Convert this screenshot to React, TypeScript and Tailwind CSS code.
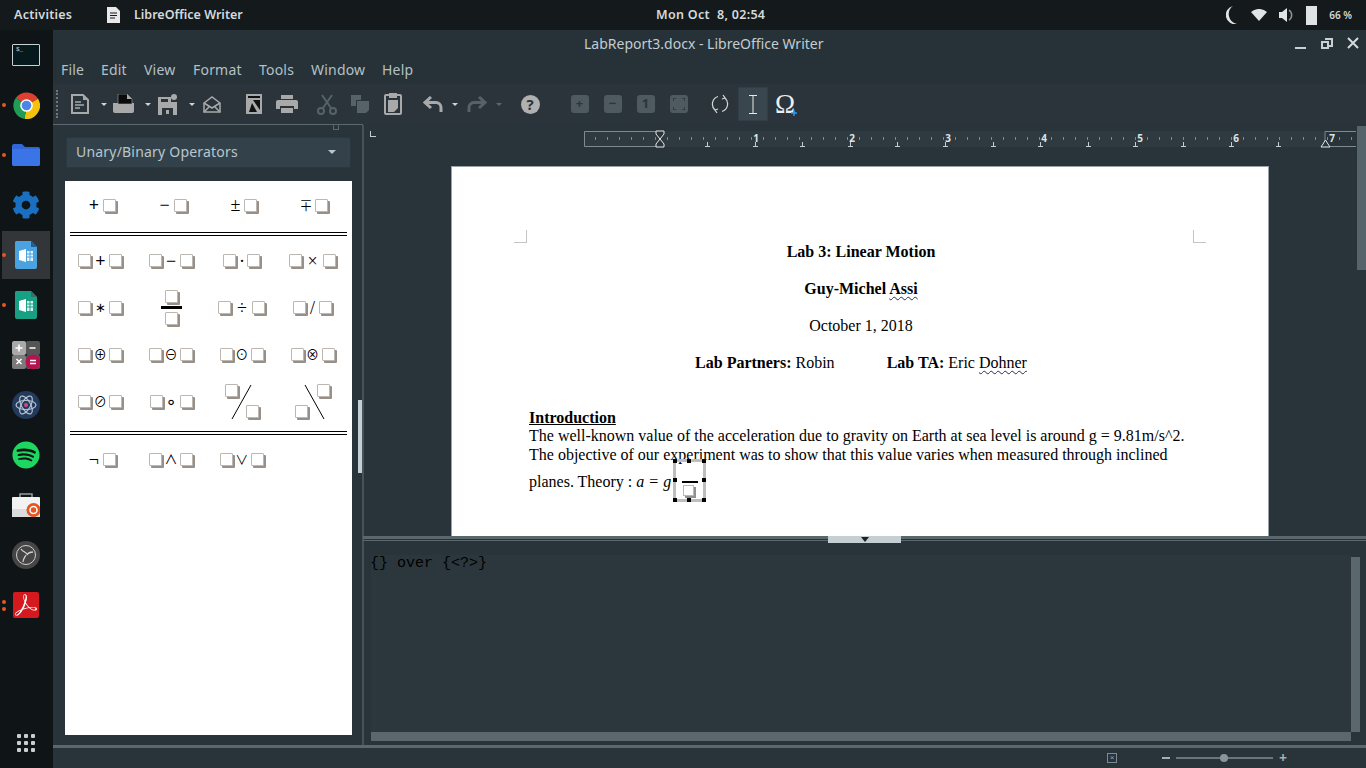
import React from 'react'
import { FaCog, FaSpotify } from 'react-icons/fa'
import { SiAdobeacrobatreader } from 'react-icons/si'

const MENUS = [
  { label: 'File', w: 'w-[40px]' },
  { label: 'Edit', w: 'w-[43px]' },
  { label: 'View', w: 'w-[49px]' },
  { label: 'Format', w: 'w-[66px]' },
  { label: 'Tools', w: 'w-[52px]' },
  { label: 'Window', w: 'w-[71px]' },
  { label: 'Help', w: 'w-[40px]' },
]

function Dot({ className = '' }: { className?: string }) {
  return <span className={`absolute left-[2px] h-[4px] w-[4px] rounded-full bg-[#e95420] ${className}`} />
}

function DockItem({ children, dot, dots, active }: { children: React.ReactNode; dot?: boolean; dots?: boolean; active?: boolean }) {
  return (
    <div className="relative flex h-[50px] w-[53px] shrink-0 items-center justify-center pr-[1px]">
      {active && <div className="absolute left-[2px] top-[1px] h-[48px] w-[48px] bg-[#333638]" />}
      {dot && <Dot className="top-[23px]" />}
      {dots && <><Dot className="top-[20px]" /><Dot className="top-[27px]" /></>}
      <div className="relative flex h-[28px] w-[28px] items-center justify-center">{children}</div>
    </div>
  )
}

function Chrome() {
  return (
    <svg width="27" height="27" viewBox="0 0 28 28">
      <path d="M14 14 L3 6 A14 14 0 0 1 26 7 Z" fill="#dd3f33" />
      <path d="M14 14 L26 7 A14 14 0 0 1 12 28 Z" fill="#f4c20d" />
      <path d="M14 14 L12 28 A14 14 0 0 1 3 6 Z" fill="#1f9d55" />
      <circle cx="14" cy="14" r="6.5" fill="#fff" />
      <circle cx="14" cy="14" r="5" fill="#4a86e8" />
    </svg>
  )
}

function DocIcon({ color, fold }: { color: string; fold: string }) {
  return (
    <svg width="22" height="28" viewBox="0 0 22 28">
      <path d="M1 0h15l6 6v20a2 2 0 0 1-2 2H2a2 2 0 0 1-2-2V1z" fill={color} />
      <path d="M16 0l6 6h-6z" fill={fold} />
      <path d="M4 10l7-2v13l-7-2z" fill="#fff" />
      <path d="M12 10h6v10h-6z" fill="#fff" opacity="0.85" />
      <path d="M12 13h6M12 16h6M15 10v10" stroke={color} strokeWidth="1" />
    </svg>
  )
}

function Dock() {
  return (
    <div className="flex w-[53px] shrink-0 flex-col bg-[#0f1517]">
      <DockItem>
        <div className="h-[22px] w-[28px] rounded-[1px] border border-[#c9d0d2] bg-[#06191d] pl-[3px] text-[6px] leading-[10px] text-[#d7dddf] [font-family:'Liberation_Mono',monospace]">$_</div>
      </DockItem>
      <DockItem dot><Chrome /></DockItem>
      <DockItem dot>
        <svg width="28" height="22" viewBox="0 0 28 22">
          <path d="M0 2a2 2 0 0 1 2-2h8l3 3h13a2 2 0 0 1 2 2v15a2 2 0 0 1-2 2H2a2 2 0 0 1-2-2z" fill="#2f66d8" />
          <path d="M0 5h28v15a2 2 0 0 1-2 2H2a2 2 0 0 1-2-2z" fill="#3b74e6" />
        </svg>
      </DockItem>
      <DockItem><FaCog size={28} className="text-[#1a6fc0]" /></DockItem>
      <DockItem dot active><DocIcon color="#4aa3e0" fold="#1f5f94" /></DockItem>
      <DockItem dot><DocIcon color="#18a085" fold="#3f6b68" /></DockItem>
      <DockItem>
        <svg width="28" height="28" viewBox="0 0 28 28">
          <rect width="14" height="14" rx="2" fill="#a9a9a9" />
          <rect x="14" width="14" height="14" rx="2" fill="#555" />
          <rect y="14" width="14" height="14" rx="2" fill="#7b7b7b" />
          <rect x="14" y="14" width="14" height="14" rx="2" fill="#555" />
          <path d="M7 3.5v7M3.5 7h7M17.5 7h6" stroke="#fff" strokeWidth="1.6" />
          <path d="M4.5 18l5 5M9.500 18l-5 5" stroke="#fff" strokeWidth="1.6" />
          <circle cx="21" cy="21" r="7.500" fill="#b5124f" />
          <path d="M18 19.500h6M18 22.500h6" stroke="#fff" strokeWidth="1.6" />
        </svg>
      </DockItem>
      <DockItem>
        <svg width="28" height="28" viewBox="0 0 28 28">
          <circle cx="14" cy="14" r="14" fill="#223a5c" />
          <g fill="none" stroke="#b7c3d3" strokeWidth="1.200">
            <ellipse cx="14" cy="14" rx="10" ry="4.500" />
            <ellipse cx="14" cy="14" rx="10" ry="4.500" transform="rotate(60 14 14)" />
            <ellipse cx="14" cy="14" rx="10" ry="4.500" transform="rotate(120 14 14)" />
          </g>
          <circle cx="14" cy="14" r="2" fill="#d4478b" />
        </svg>
      </DockItem>
      <DockItem><FaSpotify size={28} className="text-[#1ed760]" /></DockItem>
      <DockItem>
        <svg width="28" height="24" viewBox="0 0 28 24">
          <path d="M8 4V1h12v3" fill="none" stroke="#9b9b9b" strokeWidth="1.500" />
          <rect y="4" width="28" height="20" rx="1" fill="#f2f2f2" />
          <rect y="16" width="28" height="8" fill="#dcdcdc" />
          <circle cx="21.500" cy="17" r="7" fill="#e95420" />
          <circle cx="21.500" cy="17" r="3.500" fill="none" stroke="#fff" strokeWidth="1.500" />
        </svg>
      </DockItem>
      <DockItem>
        <svg width="28" height="28" viewBox="0 0 28 28">
          <circle cx="14" cy="14" r="14" fill="#454545" />
          <circle cx="14" cy="14" r="9.500" fill="none" stroke="#d0d0d0" strokeWidth="1" />
          <path d="M9 8c2 3 5 3 6 5M21 11c-3 0-5 1-6 3M11 21c0-3 2-5 3-7" fill="none" stroke="#d0d0d0" strokeWidth="1.300" />
        </svg>
      </DockItem>
      <DockItem dots>
        <div className="flex h-[26px] w-[26px] items-center justify-center rounded-[2px] bg-[#d5191f]">
          <SiAdobeacrobatreader size={22} className="text-white" />
        </div>
      </DockItem>
      <div className="mt-auto flex h-[50px] items-center justify-center pr-[1px]">
        <div className="grid grid-cols-3 gap-[3px]">
          {Array.from({ length: 9 }).map((_, i) => <span key={i} className="h-[4px] w-[4px] rounded-[1px] bg-[#c9ced0]" />)}
        </div>
      </div>
    </div>
  )
}

function Caret({ dim }: { dim?: boolean }) {
  return <span className={`ml-[6px] mr-[2px] h-0 w-0 border-x-[3px] border-t-[3px] border-x-transparent ${dim ? 'border-t-[#5d686d]' : 'border-t-[#d0d3d5]'}`} />
}

function Tool({ children, className = 'w-[33px]' }: { children: React.ReactNode; className?: string }) {
  return <div className={`flex h-[34px] shrink-0 items-center justify-center ${className}`}>{children}</div>
}

function ZoomBtn({ children }: { children: React.ReactNode }) {
  return (
    <Tool>
      <div className="flex h-[18px] w-[18px] items-center justify-center rounded-[3px] bg-[#4e5a60] text-[13px] font-bold text-[#2b363c] [font-family:'Noto_Sans',sans-serif]">{children}</div>
    </Tool>
  )
}

function Toolbar() {
  const ico = '#a9a9a9'
  const off = '#566268'
  return (
    <div className="flex h-[40px] shrink-0 items-center bg-[#2a343a] pl-[3px]">
      <div className="mr-[7px] h-[28px] w-[2px] border-l-2 border-dotted border-[#6d777c]" />
      <Tool className="w-[30px]">
        <svg width="18" height="20" viewBox="0 0 18 20">
          <path d="M1 1h11l5 5v13H1z" fill="none" stroke={ico} strokeWidth="2" />
          <path d="M12 1l5 5h-5z" fill={ico} />
          <path d="M4 8h6M4 11h9M4 14h5" stroke={ico} strokeWidth="1.500" />
        </svg>
      </Tool>
      <Caret />
      <Tool className="w-[30px]">
        <svg width="22" height="20" viewBox="0 0 22 20">
          <path d="M0 9h21v8a2 2 0 0 1-2 2H2a2 2 0 0 1-2-2z" fill={ico} />
          <path d="M5 10V0h9l5 5v5z" fill="#0b0b0b" stroke={ico} strokeWidth="0.6" />
          <path d="M14 0l5 5h-5z" fill={ico} />
        </svg>
      </Tool>
      <Caret />
      <Tool className="w-[30px]">
        <svg width="20" height="21" viewBox="0 0 20 21">
          <path d="M0 3h13v5h6v13H0z" fill={ico} />
          <rect x="3" y="5" width="7" height="3" fill="#2a343a" />
          <rect x="4" y="14" width="11" height="7" fill="#2a343a" />
          <rect x="8" y="16" width="3" height="4" fill={ico} />
          <circle cx="16" cy="3" r="3" fill={ico} />
        </svg>
      </Tool>
      <Caret />
      <Tool className="w-[29px]">
        <svg width="18" height="17" viewBox="0 0 18 17" fill="none" stroke={ico} strokeWidth="1.500">
          <path d="M1 7l8-6 8 6v9H1z" />
          <path d="M1 7l8 5 8-5M1 16l6-6M17 16l-6-6" />
        </svg>
      </Tool>
      <Tool className="ml-[12px] w-[32px]">
        <svg width="16" height="20" viewBox="0 0 16 20">
          <rect width="16" height="20" fill={ico} />
          <rect x="2" y="2" width="12" height="16" fill="#111" />
          <path d="M2 4h12v2H7l7 10v2h-3L6 9l-3 9H2z" fill={ico} />
        </svg>
      </Tool>
      <Tool>
        <svg width="22" height="18" viewBox="0 0 22 18">
          <rect x="5" width="12" height="4" fill={ico} />
          <path d="M2 5h18a2 2 0 0 1 2 2v7h-4v-3H4v3H0V7a2 2 0 0 1 2-2z" fill={ico} />
          <rect x="5" y="13" width="12" height="5" fill={ico} />
        </svg>
      </Tool>
      <Tool className="ml-[7px] w-[33px]">
        <svg width="20" height="21" viewBox="0 0 20 21" fill="none" stroke={off} strokeWidth="2">
          <circle cx="4" cy="17" r="3" />
          <circle cx="16" cy="17" r="3" />
          <path d="M6 14L15 1M14 14L5 1" />
        </svg>
      </Tool>
      <Tool>
        <svg width="18" height="18" viewBox="0 0 18 18" fill={off}>
          <path d="M0 0h10v5H5v6H0z" />
          <path d="M6 6h12v9l-3 3H6z" />
        </svg>
      </Tool>
      <Tool>
        <svg width="18" height="22" viewBox="0 0 18 22">
          <rect x="1" y="2" width="16" height="19" rx="1" fill="none" stroke={ico} strokeWidth="2" />
          <rect x="5" y="0" width="8" height="5" fill={ico} />
          <path d="M4 7h10v8l-4 4H4z" fill={ico} />
        </svg>
      </Tool>
      <Tool className="w-[48px]">
        <svg width="20" height="17" viewBox="0 0 20 17" fill="none" stroke={ico} strokeWidth="3">
          <path d="M8 1L2 6.500 8 12" />
          <path d="M3 6.500h10a5 5 0 0 1 5 5V16" />
        </svg>
      </Tool>
      <span className="-ml-[5px] h-0 w-0 border-x-[3px] border-t-[3px] border-x-transparent border-t-[#d0d3d5]" />
      <Tool className="w-[38px]">
        <svg width="20" height="17" viewBox="0 0 20 17" fill="none" stroke={off} strokeWidth="3">
          <path d="M12 1l6 5.500L12 12" />
          <path d="M17 6.500H7a5 5 0 0 0-5 5V16" />
        </svg>
      </Tool>
      <span className="h-0 w-0 border-x-[3px] border-t-[3px] border-x-transparent border-t-[#5d686d]" />
      <Tool className="w-[56px]">
        <div className="flex h-[19px] w-[19px] items-center justify-center rounded-full bg-[#b0b0b0] text-[15px] font-bold text-[#2a343a] [font-family:'Noto_Sans',sans-serif]">?</div>
      </Tool>
      <div className="w-[5px] shrink-0" />
      <ZoomBtn>+</ZoomBtn>
      <ZoomBtn>−</ZoomBtn>
      <ZoomBtn>1</ZoomBtn>
      <ZoomBtn>
        <svg width="12" height="12" viewBox="0 0 12 12" fill="none" stroke="#2b363c" strokeWidth="1.500">
          <path d="M0 3V0h3M9 0h3v3M12 9v3H9M3 12H0V9" />
        </svg>
      </ZoomBtn>
      <Tool className="ml-[9px] w-[32px]">
        <svg width="18" height="20" viewBox="0 0 18 20" fill="none" stroke="#d5d7d8" strokeWidth="1.200">
          <path d="M7 2.500A8 8 0 0 0 4 16" />
          <path d="M11 17.500A8 8 0 0 0 14 4" />
          <path d="M12 1l2 3-3 1M6 19l-2-3 3-1" />
        </svg>
      </Tool>
      <div className="ml-[2px] flex h-[34px] w-[30px] shrink-0 items-center justify-center border border-[#323e44] bg-[#3a464d]">
        <svg width="8" height="19" viewBox="0 0 8 19" fill="none" stroke="#e6e8e9" strokeWidth="1">
          <path d="M0 .500h8M0 18.500h8M4 .500v18" />
        </svg>
      </div>
      <div className="relative ml-[6px] flex h-[34px] w-[22px] items-center justify-center text-[27px] leading-none text-[#eceeef] [font-family:'Liberation_Serif',serif]">
        Ω
        <svg width="6" height="6" viewBox="0 0 6 6" className="absolute bottom-[5px] right-[-1px]">
          <path d="M3 0v6M0 3h6" stroke="#2c9cf0" strokeWidth="1.500" />
        </svg>
      </div>
    </div>
  )
}

function Box() {
  return <span className="block h-[13px] w-[13px] shrink-0 rounded-[1px] border border-[#bdb7b2] bg-white shadow-[2px_2px_0_#97908a]" />
}

function Op({ left, op, right, w = 'w-[18px]', bold, sm }: { left?: boolean; op: string; right?: boolean; w?: string; bold?: boolean; sm?: boolean }) {
  return (
    <div className="flex items-center justify-center">
      {left && <Box />}
      <span className={`${w} ${bold ? 'font-bold' : ''} ${sm ? 'text-[13px]' : 'text-[18px]'} text-center leading-none text-black [font-family:'Liberation_Serif','Noto_Sans_CJK_SC','DejaVu_Sans',serif]`}>{op}</span>
      {right && <Box />}
    </div>
  )
}

function DoubleRule() {
  return <div className="mx-[5px] h-[4px] border-y border-black bg-white" />
}

function Palette() {
  return (
    <div className="h-[554px] w-[287px] bg-white">
      <div className="grid h-[51px] grid-cols-4 items-center pb-[3px] pr-[4px]">
        <Op op="+" right bold /><Op op="−" right /><Op op="±" right /><Op op="∓" right sm />
      </div>
      <DoubleRule />
      <div className="grid grid-cols-4 grid-rows-[47px_47px_47px_47px] items-center pr-[4px] pt-[1px]">
        <Op left op="+" right bold /><Op left op="−" right /><Op left op="·" right w="w-[11px]" /><Op left op="×" right w="w-[21px]" />
        <Op left op="∗" right sm />
        <div className="flex flex-col items-center">
          <Box />
          <span className="my-[3px] h-[3px] w-[21px] bg-black" />
          <Box />
        </div>
        <Op left op="÷" right w="w-[21px]" /><Op left op="/" right w="w-[13px]" />
        <Op left op="⊕" right sm /><Op left op="⊖" right sm /><Op left op="⊙" right sm /><Op left op="⊗" right sm />
        <Op left op="⊘" right sm /><Op left op="∘" right w="w-[17px]" />
        <div className="relative mx-auto h-[36px] w-[36px]">
          <svg className="absolute inset-0" width="36" height="36" viewBox="0 0 36 36"><path d="M8 35L27 1" stroke="#000" strokeWidth="1" /></svg>
          <div className="absolute left-[1px] top-0"><Box /></div>
          <div className="absolute right-[1px] bottom-[2px]"><Box /></div>
        </div>
        <div className="relative mx-auto h-[36px] w-[36px]">
          <svg className="absolute inset-0" width="36" height="36" viewBox="0 0 36 36"><path d="M10 1l19 34" stroke="#000" strokeWidth="1" /></svg>
          <div className="absolute right-[1px] top-0"><Box /></div>
          <div className="absolute left-0 bottom-[2px]"><Box /></div>
        </div>
      </div>
      <div className="h-[6px]" />
      <DoubleRule />
      <div className="grid h-[52px] grid-cols-4 items-center pb-[3px] pr-[4px]">
        <Op op="¬" right /><Op left op="∧" right sm /><Op left op="∨" right sm />
      </div>
    </div>
  )
}

function Sidebar() {
  return (
    <div className="relative flex w-[310px] shrink-0 flex-col border-t border-[#5a686e] pl-[12px] pt-[12px]">
      <span className="absolute -top-[1px] left-[280px] h-[6px] w-[6px] border border-t-0 border-[#5a686e]" />
      <div className="ml-[1px] flex h-[31px] w-[285px] items-center justify-between border border-[#2c373d] bg-[#33424a] pb-[2px] pl-[9px] pr-[14px] text-[14px] tracking-[0.2px] text-[#b9c6cc] [font-family:'Noto_Sans',sans-serif]">
        Unary/Binary Operators
        <span className="h-0 w-0 border-x-[4px] border-t-[4px] border-x-transparent border-t-[#b9c6cc]" />
      </div>
      <div className="mt-[13px]"><Palette /></div>
      {/* splitter line and its grip */}
      <div className="absolute bottom-0 right-[-1px] top-0 w-[2px] bg-[#46545a]" />
      <div className="absolute right-[1px] top-[275px] h-[73px] w-[4px] bg-[#c5ced3]" />
    </div>
  )
}

function Ruler() {
  const nums = [1, 2, 3, 4, 5, 6, 7]
  const minor = Array.from({ length: 64 }).map((_, i) => 232 + i * 12)
  const tabs = Array.from({ length: 14 }).map((_, i) => 344 + i * 47.6)
  return (
    <svg width="993" height="30" viewBox="0 0 993 30" className="block shrink-0">
      <rect x="221" y="4" width="740" height="16" fill="#2f3a40" />
      <path d="M221.500 4.500h76v15h-76zM993 4.500h-31v15h31" fill="none" stroke="#808a8e" />
      {minor.map(x => (
        <line key={x} x1={x + 0.5} x2={x + 0.5} y1={(x - 297) % 48 === 0 ? 7 : 10} y2={(x - 297) % 48 === 0 ? 16 : 13} stroke="#7f898d" />
      ))}
      {tabs.map(x => (
        <path key={x} d={`M${Math.round(x)}.5 15v4M${Math.round(x) - 2} 19.500h5`} stroke="#c8ccce" fill="none" />
      ))}
      {nums.map(n => (
        <text key={n} x={297 + n * 96} y="15" textAnchor="middle" fontSize="10" fontWeight="700" fill="#dfe3e4" fontFamily="Noto Sans, sans-serif">{n}</text>
      ))}
      <path d="M293 4h8v3l-4 5-4-5zM293 20h8v-3l-4-5-4 5z" fill="#2a343a" stroke="#e6e8e9" />
      <path d="M958 20h9l-2-3-2.500-4-2.500 4z" fill="#2a343a" stroke="#e6e8e9" />
    </svg>
  )
}

function CropMark({ className }: { className: string }) {
  return <div className={`absolute h-[13px] w-[13px] border-[#c4c4c4] ${className}`} />
}

function Squiggle({ children }: { children: React.ReactNode }) {
  return <span className="underline decoration-[#2b2b55] decoration-wavy decoration-1 underline-offset-2">{children}</span>
}

function Handle({ className }: { className: string }) {
  return <span className={`absolute h-[4px] w-[4px] bg-black ${className}`} />
}

function Selection() {
  return (
    <span className="relative ml-[2px] inline-block h-0 w-[33px]">
      <span className="absolute left-0 top-[-28px] h-[43px] w-[33px] border-[3px] border-[#bdbdbd]">
        <span className="absolute left-[6px] top-[19px] h-[2px] w-[16px] bg-black" />
        <span className="absolute left-[7px] top-[23px] block h-[11px] w-[11px] border border-[#bdb7b2] bg-white shadow-[2px_2px_0_#97908a]" />
        <Handle className="-left-[3px] -top-[3px]" />
        <Handle className="left-[11px] -top-[3px]" />
        <Handle className="-right-[3px] -top-[3px]" />
        <Handle className="-left-[3px] top-[16px]" />
        <Handle className="-right-[3px] top-[16px]" />
        <Handle className="-left-[3px] -bottom-[3px]" />
        <Handle className="left-[11px] -bottom-[3px]" />
        <Handle className="-right-[3px] -bottom-[3px]" />
      </span>
    </span>
  )
}

function Page() {
  return (
    <div className="relative ml-[88px] h-[370px] w-[818px] shrink-0 border-x border-t border-[#9aa2a6] bg-white pl-[77px] pt-[76px] text-[16px] leading-[18.5px] text-black [font-family:'Liberation_Serif',serif]">
      <CropMark className="left-[62px] top-[63px] border-b border-r" />
      <CropMark className="right-[62px] top-[63px] border-b border-l" />
      <div className="w-[664px] whitespace-nowrap">
        <div className="text-center font-bold">Lab 3: Linear Motion</div>
        <div className="mt-[18.5px] text-center font-bold">Guy-Michel <Squiggle>Assi</Squiggle></div>
        <div className="mt-[18.5px] text-center">October 1, 2018</div>
        <div className="mt-[18.5px] flex justify-center">
          <span><b>Lab Partners:</b> Robin</span>
          <span className="ml-[52px]"><b>Lab TA:</b> Eric <Squiggle>Dohner</Squiggle></span>
        </div>
        <div className="mt-[36px] font-bold underline">Introduction</div>
        <div>The well-known value of the acceleration due to gravity on Earth at sea level is around g = 9.81m/s^2.</div>
        <div>The objective of our experiment was to show that this value varies when measured through inclined</div>
        <div className="mt-[8.500px] flex items-baseline">
          <span className="whitespace-pre">planes. Theory : <i>a</i> <span className="ml-[1px]">=</span> <i className="ml-[1px]">g</i></span>
          <Selection />
        </div>
      </div>
    </div>
  )
}

function Workspace() {
  return (
    <div className="flex min-w-0 flex-1 flex-col">
      <div className="flex h-[412px] shrink-0">
        <div className="relative w-[994px] shrink-0 overflow-hidden">
          <div className="h-[3px]" />
          <Ruler />
          <span className="absolute left-[7px] top-[7px] h-[6px] w-[6px] border-b border-l border-[#c5cace]" />
          <div className="h-[9px]" />
          <Page />
        </div>
        <div className="w-[9px] shrink-0 pt-[2px]">
          <div className="h-[144px] bg-[#55636a]" />
        </div>
      </div>
      <div className="relative h-[7px] shrink-0 border-t-[3px] border-[#5a686e]">
        <div className="mt-[1px] h-[1px] bg-[#5a686e]" />
        <div className="absolute -top-[3px] left-[465px] flex h-[7px] w-[73px] items-center justify-center bg-[#c5ced3]">
          <span className="h-0 w-0 border-x-[4px] border-t-[5px] border-x-transparent border-t-[#1d2427]" />
        </div>
      </div>
      <div className="flex min-h-0 flex-1 pl-[8px] pt-[12px]">
        <div className="flex w-[980px] flex-col">
          <div className="flex-1 bg-[#2c373d] pt-[1px] text-[15px] leading-[16px] text-black [font-family:'Liberation_Mono',monospace]">
            <span className="-ml-[1px] block">{'{} over {<?>}'}</span>
          </div>
          <div className="mb-[4px] h-[9px] bg-[#5a686e]" />
        </div>
        <div className="mb-[13px] mt-[2px] w-[9px] bg-[#5a686e]" />
      </div>
    </div>
  )
}

function StatusBar() {
  return (
    <div className="flex h-[23px] shrink-0 items-center border-t-[3px] border-[#5a686e] bg-[#28333a] pl-[1054px]">
      <div className="flex h-[10px] w-[10px] items-center justify-center border border-[#80898d] text-[8px] leading-none text-[#a0a8ab] [font-family:'Liberation_Sans',sans-serif]">×</div>
      <span className="ml-[45px] h-[2px] w-[8px] bg-[#a9adaf]" />
      <div className="relative ml-[6px] h-[2px] w-[97px] bg-[#6b767b]">
        <span className="absolute left-[44px] top-[-3px] h-[8px] w-[8px] rounded-full bg-[#8b9498]" />
      </div>
      <span className="ml-[6px] text-[14px] font-bold leading-none text-[#a9adaf] [font-family:'Noto_Sans',sans-serif]">+</span>
    </div>
  )
}

export default function App() {
  return (
    <div className="flex h-[768px] w-[1366px] flex-col overflow-hidden bg-[#28333a] [font-family:'Noto_Sans',sans-serif]">
      <div className="flex h-[30px] shrink-0 items-center bg-[#14191c] text-[12.500px] font-semibold text-[#d3dadd]">
        <span className="ml-[14px] w-[93px] tracking-[0.25px]">Activities</span>
        <svg width="13" height="16" viewBox="0 0 13 16" className="mr-[14px]">
          <path d="M0 0h9l4 4v12H0z" fill="#e8e8e8" />
          <path d="M3 6h7M3 8.500h7M3 11h5" stroke="#14191c" />
        </svg>
        <span className="w-[522px]">LibreOffice Writer</span>
        <span className="tracking-[0.3px]">Mon Oct&nbsp; 8, 02:54</span>
        <div className="ml-auto flex items-center pr-[14px]">
          <svg width="12" height="18" viewBox="0 0 12 18" className="mr-[13px]"><path d="M7 0a9 9 0 0 0 4 18A10 10 0 0 1 7 0z" fill="#e0e4e5" /></svg>
          <svg width="16" height="12" viewBox="0 0 16 12" className="mr-[12px]"><path d="M0 3a12 12 0 0 1 16 0L8 12z" fill="#e0e4e5" /></svg>
          <svg width="15" height="16" viewBox="0 0 15 16" className="mr-[12px]">
            <path d="M0 5h3l5-4v14l-5-4H0z" fill="#e0e4e5" />
            <path d="M10 3a6 6 0 0 1 0 10" fill="none" stroke="#8e9598" strokeWidth="1.500" />
          </svg>
          <span className="mr-[12px] h-[19px] w-[11px] bg-[#dfe3e5]" />
          <span className="text-[10px]">66 %</span>
        </div>
      </div>
      <div className="flex min-h-0 flex-1">
        <Dock />
        <div className="flex min-w-0 flex-1 flex-col">
          <div className="flex h-[26px] shrink-0 items-center bg-[#263238] text-[14px] text-[#c3ccd0]">
            <span className="ml-[531px]">LabReport3.docx - LibreOffice Writer</span>
            <div className="ml-auto flex items-center gap-[12px] pr-[6px]">
              <svg width="14" height="14" viewBox="0 0 14 14"><rect x="1" y="11" width="11" height="2" fill="#c9d0d3" /></svg>
              <svg width="14" height="14" viewBox="0 0 14 14" fill="none" stroke="#c9d0d3" strokeWidth="2"><path d="M2 6h6v6H2z" /><path d="M5 3h7v7h-3" /></svg>
              <svg width="14" height="14" viewBox="0 0 14 14" fill="none" stroke="#d5dadc" strokeWidth="2"><path d="M2 2l10 10M12 2L2 12" /></svg>
            </div>
          </div>
          <div className="flex h-[28px] shrink-0 items-center bg-[#263238] pb-[2px] pl-[8px] text-[14px] tracking-[0.2px] text-[#b4c0c6]">
            {MENUS.map(m => <span key={m.label} className={m.w}>{m.label}</span>)}
          </div>
          <Toolbar />
          <div className="flex min-h-0 flex-1 bg-[#28333a]">
            <Sidebar />
            <Workspace />
          </div>
          <StatusBar />
        </div>
      </div>
    </div>
  )
}
